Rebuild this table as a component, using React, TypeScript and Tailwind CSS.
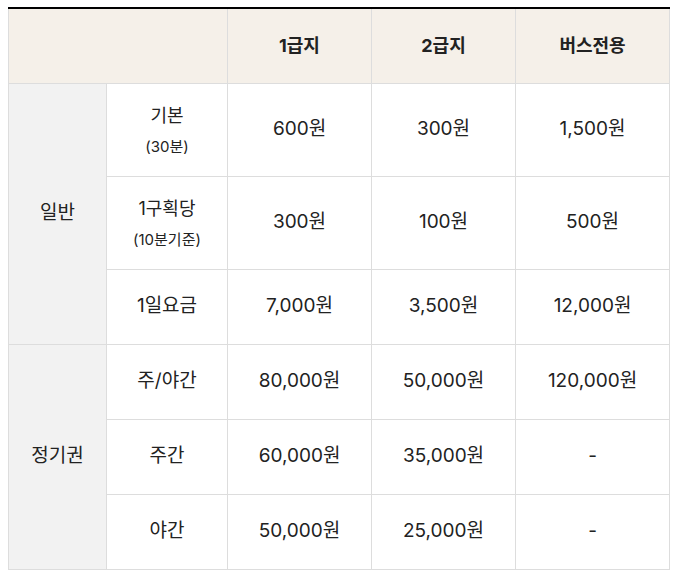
import React from "react";

const font = { fontFamily: 'Inter, "Noto Sans CJK KR", sans-serif' };

const Cell = ({ children, className = "", rowSpan }: { children?: React.ReactNode; className?: string; rowSpan?: number }) => (
  <td rowSpan={rowSpan} className={`border border-[#dddddd] text-center align-middle text-[19px] text-[#222] ${className}`}>{children}</td>
);

export default function App() {
  return (
    <div className="bg-white w-[680px] h-[581px] pt-[7px] pl-[8px]" style={font}>
      <table className="table-fixed border-collapse w-[661px] border-t-2 border-t-black">
        <colgroup>
          <col className="w-[98px]" />
          <col className="w-[121px]" />
          <col className="w-[144px]" />
          <col className="w-[144px]" />
          <col className="w-[154px]" />
        </colgroup>
        <thead>
          <tr className="h-[75px] bg-[#f5f0e9]">
            <th colSpan={2} className="border border-[#dddddd] border-t-black"></th>
            <th className="border border-[#dddddd] border-t-black text-[18px] font-bold text-[#222]">1급지</th>
            <th className="border border-[#dddddd] border-t-black text-[18px] font-bold text-[#222]">2급지</th>
            <th className="border border-[#dddddd] border-t-black text-[18px] font-bold text-[#222]">버스전용</th>
          </tr>
        </thead>
        <tbody>
          <tr className="h-[93px]">
            <Cell rowSpan={3} className="bg-[#f2f2f2] text-[18px]">일반</Cell>
            <Cell>
              <div className="leading-[26px] text-[18px]">기본</div>
              <div className="text-[15px] leading-[20px] mt-[8px]">(30분)</div>
            </Cell>
            <Cell>600원</Cell>
            <Cell>300원</Cell>
            <Cell>1,500원</Cell>
          </tr>
          <tr className="h-[93px]">
            <Cell>
              <div className="leading-[26px] text-[18px]">1구획당</div>
              <div className="text-[15px] leading-[20px] mt-[8px]">(10분기준)</div>
            </Cell>
            <Cell>300원</Cell>
            <Cell>100원</Cell>
            <Cell>500원</Cell>
          </tr>
          <tr className="h-[75px]">
            <Cell className="text-[18px]">1일요금</Cell>
            <Cell>7,000원</Cell>
            <Cell>3,500원</Cell>
            <Cell>12,000원</Cell>
          </tr>
          <tr className="h-[75px]">
            <Cell rowSpan={3} className="bg-[#f2f2f2] text-[18px]">정기권</Cell>
            <Cell className="text-[18px]">주/야간</Cell>
            <Cell>80,000원</Cell>
            <Cell>50,000원</Cell>
            <Cell>120,000원</Cell>
          </tr>
          <tr className="h-[75px]">
            <Cell className="text-[18px]">주간</Cell>
            <Cell>60,000원</Cell>
            <Cell>35,000원</Cell>
            <Cell>-</Cell>
          </tr>
          <tr className="h-[75px]">
            <Cell className="text-[18px]">야간</Cell>
            <Cell>50,000원</Cell>
            <Cell>25,000원</Cell>
            <Cell>-</Cell>
          </tr>
        </tbody>
      </table>
    </div>
  );
}
